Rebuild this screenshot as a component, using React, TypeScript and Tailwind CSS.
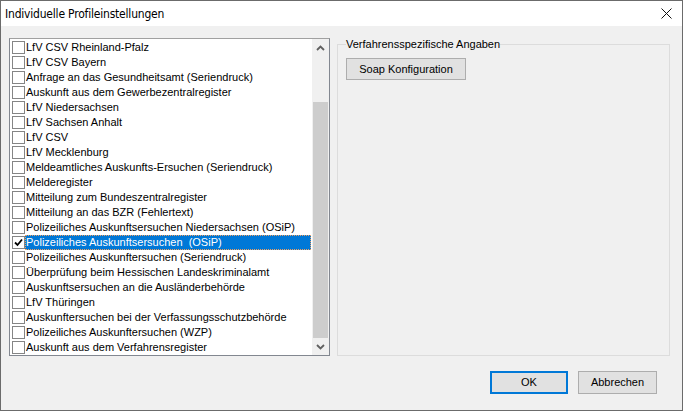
import React from "react";

const items: string[] = [
  "LfV CSV Rheinland-Pfalz",
  "LfV CSV Bayern",
  "Anfrage an das Gesundheitsamt (Seriendruck)",
  "Auskunft aus dem Gewerbezentralregister",
  "LfV Niedersachsen",
  "LfV Sachsen Anhalt",
  "LfV CSV",
  "LfV Mecklenburg",
  "Meldeamtliches Auskunfts-Ersuchen (Seriendruck)",
  "Melderegister",
  "Mitteilung zum Bundeszentralregister",
  "Mitteilung an das BZR (Fehlertext)",
  "Polizeiliches Auskunftsersuchen Niedersachsen (OSiP)",
  "Polizeiliches Auskunftsersuchen  (OSiP)",
  "Polizeiliches Auskunftersuchen (Seriendruck)",
  "Überprüfung beim Hessischen Landeskriminalamt",
  "Auskunftsersuchen an die Ausländerbehörde",
  "LfV Thüringen",
  "Auskunftersuchen bei der Verfassungsschutzbehörde",
  "Polizeiliches Auskunftersuchen (WZP)",
  "Auskunft aus dem Verfahrensregister",
];

const SELECTED = 13;

const CheckRow = ({ label, selected }: { label: string; selected: boolean }) => {
  return (
    <div className="flex items-center h-[15px]">
      <div className="ml-[2px] w-[13px] h-[13px] border border-[#858585] bg-white flex items-center justify-center shrink-0">
        {selected && (
          <svg width="9" height="9" viewBox="0 0 9 9">
            <path d="M1 4.5 L3.5 7 L8 1.5" fill="none" stroke="#000" strokeWidth="1.8" />
          </svg>
        )}
      </div>
      <div
        className={`flex-1 h-[15px] leading-[15px] pl-[1px] whitespace-pre mr-[1px] ${
          selected ? "bg-[#0078d7] text-white outline outline-1 outline-dotted outline-[#f0a060] -outline-offset-1" : "text-black"
        }`}
      >
        {label}
      </div>
    </div>
  );
};

const Chevron = ({ up }: { up: boolean }) => (
  <svg width="9" height="6" viewBox="0 0 9 6">
    <path
      d={up ? "M1 5 L4.5 1.5 L8 5" : "M1 1 L4.5 4.5 L8 1"}
      fill="none"
      stroke="#606060"
      strokeWidth="1.8"
    />
  </svg>
);

export default function App() {
  return (
    <div
      className="w-[683px] h-[411px] border border-[#6b6b6b] flex flex-col bg-[#f0f0f0] text-[11px] text-black"
      style={{ fontFamily: '"Liberation Sans", Arial, sans-serif' }}
    >
      {/* title bar */}
      <div className="h-[25px] bg-white flex items-center justify-between shrink-0">
        <span
          className="pl-[4px] text-[12px] tracking-[-0.2px]"
          style={{ fontFamily: '"Liberation Sans Narrow", "DejaVu Sans Condensed", sans-serif' }}
        >
          Individuelle Profileinstellungen
        </span>
        <svg className="mr-[10px]" width="11" height="11" viewBox="0 0 11 11">
          <path d="M0.5 0.5 L10.5 10.5 M10.5 0.5 L0.5 10.5" stroke="#111" strokeWidth="1" />
        </svg>
      </div>

      <div className="flex-1 flex flex-col px-[8px] pt-[11px]">
        <div className="flex items-start">
          {/* list */}
          <div className="mt-[1px] w-[321px] h-[318px] border border-[#828790] border-t-[#a0a0a0] bg-white flex">
            <div className="flex-1 pt-[1px] overflow-hidden">
              {items.map((it, i) => (
                <CheckRow key={i} label={it} selected={i === SELECTED} />
              ))}
            </div>
            <div className="w-[17px] bg-[#f0f0f0] flex flex-col">
              <div className="h-[17px] flex items-center justify-center">
                <Chevron up />
              </div>
              <div className="flex-1 flex flex-col pt-[46px] px-[1px]">
                <div className="flex-1 bg-[#cdcdcd]" />
              </div>
              <div className="h-[17px] flex items-center justify-center">
                <Chevron up={false} />
              </div>
            </div>
          </div>

          {/* group box */}
          <fieldset className="ml-[7px] w-[333px] h-[319px] border border-[#dcdcdc] px-[8px]">
            <legend className="px-[0px] leading-[14px] text-[11px]">Verfahrensspezifische Angaben</legend>
            <button className="mt-[7px] w-[120px] h-[22px] bg-[#e1e1e1] border border-[#adadad] text-[11px]">
              Soap Konfiguration
            </button>
          </fieldset>
        </div>

        <div className="flex justify-end mt-[15px] pr-[17px] gap-[10px]">
          <button className="w-[78px] h-[23px] bg-[#e1e1e1] border-2 border-[#0078d7]">OK</button>
          <button className="w-[79px] h-[23px] bg-[#e1e1e1] border border-[#adadad]">Abbrechen</button>
        </div>
      </div>
    </div>
  );
}
